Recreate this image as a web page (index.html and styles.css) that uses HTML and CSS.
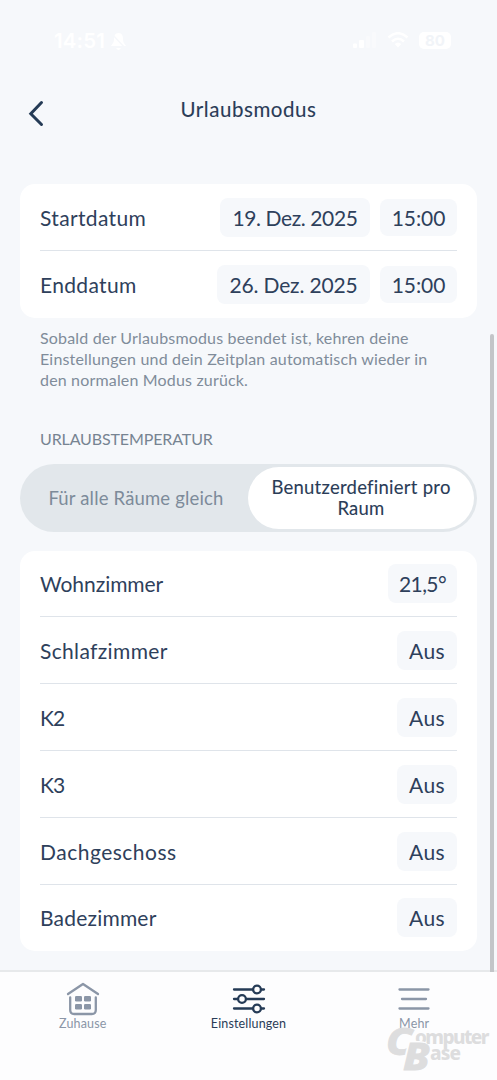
FILE: index.html
```html
<!DOCTYPE html>
<html lang="de">
<head>
<meta charset="utf-8">
<title>Urlaubsmodus</title>
<link rel="stylesheet" href="styles.css">
</head>
<body>
<div class="screen">
  <div class="statusbar">
    <div class="clock"><span>14:51</span>
      <svg width="17" height="19" viewBox="0 0 17 19"><path d="M8.500 1C5 1 4 4 4 7c0 4-2 5-3 7h15c-1-2-3-3-3-7 0-3-1-6-4.500-6zM6 16h5q-2.500 4-5 0z" fill="#fff"/><path d="M1 1l15 16" stroke="#f6f8fb" stroke-width="1.500"/></svg>
    </div>
    <div class="signals">
      <svg width="24" height="17" viewBox="0 0 24 17"><rect y="11.500" width="4" height="4.500" rx="1" fill="#fff"/><rect x="6" y="8" width="5" height="8" rx="1" fill="#fff"/><rect x="13" y="4" width="4" height="12" rx="1" fill="#f9fafc"/><rect x="19" y="0" width="4" height="16" rx="1" fill="#f9fafc"/></svg>
      <svg width="22" height="16" viewBox="0 0 22 16"><g fill="none" stroke="#fff" stroke-width="2.600"><path d="M1.500 5.500Q11-3 20.500 5.500M5 9.500Q11 4 17 9.500"/></g><path d="M7.700 12Q11 9 14.300 12L11 15.500z" fill="#fff"/></svg>
      <div class="battery">80</div>
    </div>
  </div>
  <header class="header">
    <svg class="back" width="16" height="27" viewBox="0 0 16 27"><path d="M13.500 2.500L2.800 13.700L13.500 24.500" fill="none" stroke="#253b56" stroke-width="3" stroke-linecap="round" stroke-linejoin="miter"/></svg>
    <h1 class="title">Urlaubsmodus</h1>
  </header>
  <main class="content">
    <section class="card">
      <div class="row"><span>Startdatum</span><div class="chips"><span class="chip date">19. Dez. 2025</span><span class="chip time">15:00</span></div></div>
      <div class="row"><span>Enddatum</span><div class="chips"><span class="chip date late">26. Dez. 2025</span><span class="chip time">15:00</span></div></div>
    </section>
    <p class="note">Sobald der Urlaubsmodus beendet ist, kehren deine<br>Einstellungen und dein Zeitplan automatisch wieder in<br>den normalen Modus zurück.</p>
    <h2 class="section">URLAUBSTEMPERATUR</h2>
    <div class="switch">
      <div class="option">Für alle Räume gleich</div>
      <div class="option selected">Benutzerdefiniert pro<br>Raum</div>
    </div>
    <section class="card">
      <div class="row"><span class="living">Wohnzimmer</span><span class="chip degree">21,5°</span></div>
      <div class="row"><span>Schlafzimmer</span><span class="chip off">Aus</span></div>
      <div class="row"><span class="short">K2</span><span class="chip off">Aus</span></div>
      <div class="row"><span class="short">K3</span><span class="chip off">Aus</span></div>
      <div class="row"><span class="attic">Dachgeschoss</span><span class="chip off">Aus</span></div>
      <div class="row"><span class="bath">Badezimmer</span><span class="chip off">Aus</span></div>
    </section>
  </main>
  <div class="scrollbar"></div>
  <nav class="tabs">
    <div class="tab home">
      <svg width="34" height="34" viewBox="0 0 34 34"><g fill="none" stroke="#8b96a7" stroke-width="2.300" stroke-linecap="round" stroke-linejoin="round"><path d="M2 12L17 2L32 12M4.200 15.500V28Q4.200 32 8.200 32H25.800Q29.800 32 29.800 28V15.500"/></g><g fill="#8b96a7"><rect x="9" y="14" width="7" height="5.500" rx="1.300"/><rect x="18" y="14" width="7" height="5.500" rx="1.300"/><rect x="9" y="22" width="7" height="5.500" rx="1.300"/><rect x="18" y="22" width="7" height="5.500" rx="1.300"/></g></svg>
      <span>Zuhause</span>
    </div>
    <div class="tab settings">
      <svg width="34" height="34" viewBox="0 0 34 34"><g fill="none" stroke="#253b56" stroke-width="2.300" stroke-linecap="round"><path d="M2 7.500H21M29 7.500H32M2 17H5.500M14.500 17H32M2 26.500H21M29 26.500H32"/><circle cx="25" cy="7.500" r="3.900"/><circle cx="10" cy="17" r="3.900"/><circle cx="25" cy="26.500" r="3.900"/></g></svg>
      <span>Einstellungen</span>
    </div>
    <div class="tab more">
      <svg width="34" height="34" viewBox="0 0 34 34"><path d="M2.500 7.500H31.500M5 17H29M2.500 26.500H31.500" stroke="#8b96a7" stroke-width="2.300" stroke-linecap="round"/></svg>
      <span>Mehr</span>
    </div>
  </nav>
  <div class="watermark">
    <span class="initial big-c">C</span><span class="word omputer">omputer</span>
    <span class="initial big-b">B</span><span class="word ase">ase</span>
  </div>
</div>
</body>
</html>
```
FILE: styles.css
```css
* { box-sizing: border-box; }
body { margin: 0; background: #f6f8fb; color: #2e405b; font-family: Lato, sans-serif; }
svg { display: block; flex: none; }
h1, h2, p { margin: 0; font-weight: 400; }
.screen { position: relative; width: 497px; height: 1080px; overflow: hidden; display: flex; flex-direction: column; }
.statusbar { height: 80px; padding: 0 46px 0 54px; display: flex; justify-content: space-between; align-items: center; color: #fff; }
.clock { display: flex; align-items: center; gap: 5px; padding-top: 2px; font: 600 20.5px/24px Inter, sans-serif; letter-spacing: .1px; }
.signals { display: flex; align-items: center; gap: 10px; }
.battery { width: 32px; height: 17px; border-radius: 5px; background: #fff; color: #f1f4f8; font: 700 15px/17px Inter, sans-serif; text-align: center; }
.header { height: 104px; padding-left: 28px; display: flex; }
.back { margin-top: 20px; }
.title { width: 409px; margin-top: 14px; font-size: 20.5px; line-height: 30px; text-align: center; color: #2a3c57; letter-spacing: .55px; -webkit-text-stroke: .1px; }
.content { height: 786px; padding: 0 20px; }
.card { background: #fff; border-radius: 15px; padding: 0 20px; }
.row { height: 66.8px; padding-top: 1px; border-bottom: 1.5px solid #dfe4ea; display: flex; align-items: center; justify-content: space-between; font-size: 21px; letter-spacing: .35px; }
.row:last-child { border-bottom-color: transparent; }
.living { letter-spacing: -.05px; }
.short { letter-spacing: -.9px; }
.attic { letter-spacing: .5px; }
.bath { letter-spacing: .2px; }
.chips { display: flex; gap: 10px; align-items: center; }
.chip { height: 39px; border-radius: 8px; background: #f6f8fb; display: flex; align-items: center; justify-content: center; white-space: nowrap; }
.date { width: 150px; letter-spacing: -.4px; }
.late { width: 153px; letter-spacing: -.15px; }
.time { width: 77px; height: 37px; letter-spacing: -.1px; }
.degree { width: 69px; letter-spacing: -.6px; }
.off { width: 60px; }
.note { margin: 9px 20px 0; height: 102px; font-size: 16px; line-height: 21px; color: #808c9a; white-space: nowrap; letter-spacing: .17px; }
.section { margin-left: 20px; height: 35px; font-size: 16px; line-height: 20px; color: #778492; letter-spacing: -.12px; }
.switch { height: 68px; margin-bottom: 19px; padding: 3px; border-radius: 34px; background: #e2e7eb; display: flex; }
.option { width: 225px; display: flex; align-items: center; justify-content: center; text-align: center; padding-left: 1px; padding-top: 1px; font-size: 18.5px; line-height: 21px; color: #7d8b9a; white-space: nowrap; letter-spacing: .17px; }
.selected { width: 226px; padding: 1px 0 0; border-radius: 31px; background: #fff; color: #2a3c57; font-size: 18.5px; letter-spacing: .25px; -webkit-text-stroke: .1px; }
.scrollbar { position: absolute; right: 3px; top: 334px; width: 4px; height: 638px; border-radius: 2px 2px 0 0; background: #c3c5c8; }
.tabs { height: 110px; background: #fdfdfe; border-top: 2px solid #e7e9eb; display: flex; color: #8b96a7; }
.tab { width: 165.7px; padding-top: 10px; display: flex; flex-direction: column; align-items: center; font-size: 12.5px; line-height: 15px; letter-spacing: .15px; }
.settings { color: #2a3c57; }
.watermark { position: absolute; left: 386px; top: 1022px; width: 105px; height: 55px; color: #ddddde; font-family: "Noto Sans", sans-serif; font-weight: 800; }
.watermark span { position: absolute; line-height: 1; }
.initial { font-style: italic; font-size: 38px; transform-origin: left; transform: scaleX(1.12); -webkit-text-stroke: .8px; }
.big-c { left: 0; top: -1px; }
.big-b { left: 17px; top: 14px; text-shadow: -2px -1px #fdfdfe, -1px -2px #fdfdfe; }
.word { font-size: 19px; }
.omputer { left: 29px; top: 6px; letter-spacing: -1.6px; }
.ase { left: 44px; top: 22px; letter-spacing: -.9px; }
```
